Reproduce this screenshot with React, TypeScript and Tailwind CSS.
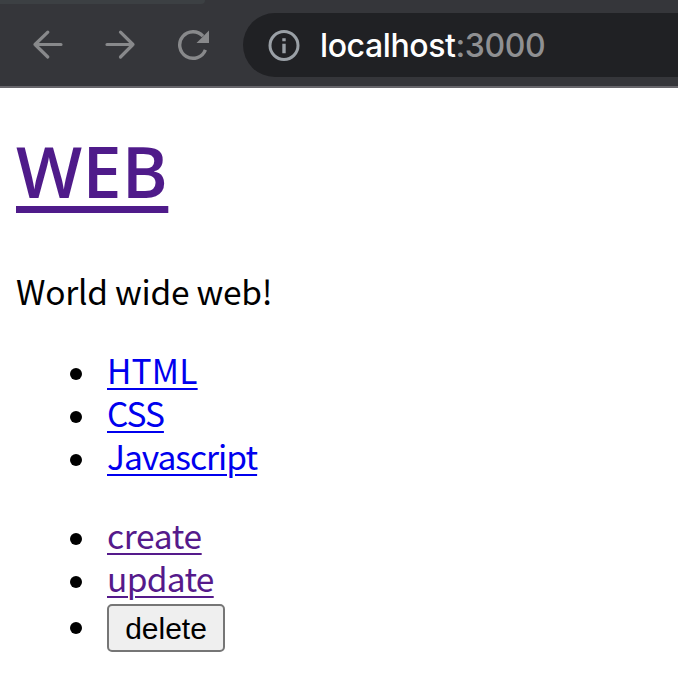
import type { ReactNode } from "react";

function Item({ children, className = "h-[43px]", dot = "mt-[9px]" }: { children: ReactNode; className?: string; dot?: string }) {
  return (
    <li className={`flex items-center ${className}`}>
      <span className={`mr-[25px] size-3 shrink-0 rounded-full bg-black ${dot}`} />
      {children}
    </li>
  );
}

const link = "underline decoration-2 underline-offset-[4px] leading-[43px]";

function Toolbar() {
  return (
    <header className="h-[88px] border-b-2 border-[#67666b] bg-[#35363a]">
      <div className="h-[4px] w-[205px] rounded-br-[10px] bg-[#3c4043]" />
      <div className="mt-[9px] flex h-16 items-center">
        <svg className="ml-[32px] h-8 w-8 shrink-0" viewBox="0 0 32 32" fill="none" stroke="#88898b" strokeWidth="3.2" strokeLinecap="round" strokeLinejoin="round">
          <path d="M29 15.5H3M15.8 3.2L3 15.5l12.8 12.5" />
        </svg>
        <svg className="ml-[40px] h-8 w-8 shrink-0" viewBox="0 0 32 32" fill="none" stroke="#88898b" strokeWidth="3.2" strokeLinecap="round" strokeLinejoin="round">
          <path d="M3 15.5h26M16.5 3.2L29 15.5 16.5 28" />
        </svg>
        <svg className="ml-[41px] h-8 w-8 shrink-0" viewBox="0 0 32 32" fill="none">
          <path d="M28.4 20.8A13.3 13.3 0 1 1 26 7.2" stroke="#88898b" strokeWidth="3.4" />
          <path d="M32 1.5V14H19.5Z" fill="#88898b" />
        </svg>
        <div className="ml-[34px] flex h-16 flex-1 items-center rounded-l-full bg-[#202124]">
          <svg className="ml-[25px] h-8 w-8 shrink-0" viewBox="0 0 32 32" fill="none">
            <circle cx="16" cy="16.5" r="14" stroke="#9aa0a6" strokeWidth="3" />
            <path d="M14.3 9.2h3.4v3.1h-3.4zM14.3 14.8h3.4v9.4h-3.4z" fill="#9aa0a6" />
          </svg>
          <span className="ml-[20px] mt-[2px] whitespace-nowrap font-['Inter',sans-serif] text-[32px] font-medium leading-[64px] tracking-[-0.4px] text-white">
            localhost<span className="tracking-[-0.4px] text-[#8f9092]">:3000</span>
          </span>
        </div>
      </div>
    </header>
  );
}

export default function App() {
  return (
    <div className="h-[678px] w-full overflow-hidden bg-white font-['Noto_Sans_CJK_KR',sans-serif] text-[33.5px] text-black">
      <Toolbar />
      <main className="pl-4">
        <h1 className="mt-[40px] h-[86px] font-['Open_Sans',sans-serif] text-[70px] font-semibold leading-[86px] tracking-[0.3px]">
          <a className="text-[#4f1b8a] underline decoration-[7px] underline-offset-[8px]">WEB</a>
        </h1>
        <p className="mt-[55px] h-[43px] leading-[43px] tracking-[-0.27px]">World wide web!</p>
        <ul className="mt-[36px] pl-[54px] text-black">
          <Item><a className={`${link} tracking-[0.2px] text-[#0000ee]`}>HTML</a></Item>
          <Item><a className={`${link} tracking-[-1px] text-[#0000ee]`}>CSS</a></Item>
          <Item><a className={`${link} tracking-[-1px] text-[#0000ee]`}>Javascript</a></Item>
        </ul>
        <ul className="mt-[36px] pl-[54px] text-black">
          <Item><a className={`${link} tracking-[-0.35px] text-[#551a8b]`}>create</a></Item>
          <Item><a className={`${link} tracking-[-0.7px] text-[#551a8b]`}>update</a></Item>
          <Item className="mt-[3px] h-[52px]" dot="">
            <button className="h-[48px] w-[118px] rounded-[5px] border-2 border-[#767676] bg-[#efefef] font-['Liberation_Sans',sans-serif] text-[30px] leading-[43px] text-black">delete</button>
          </Item>
        </ul>
      </main>
    </div>
  );
}
